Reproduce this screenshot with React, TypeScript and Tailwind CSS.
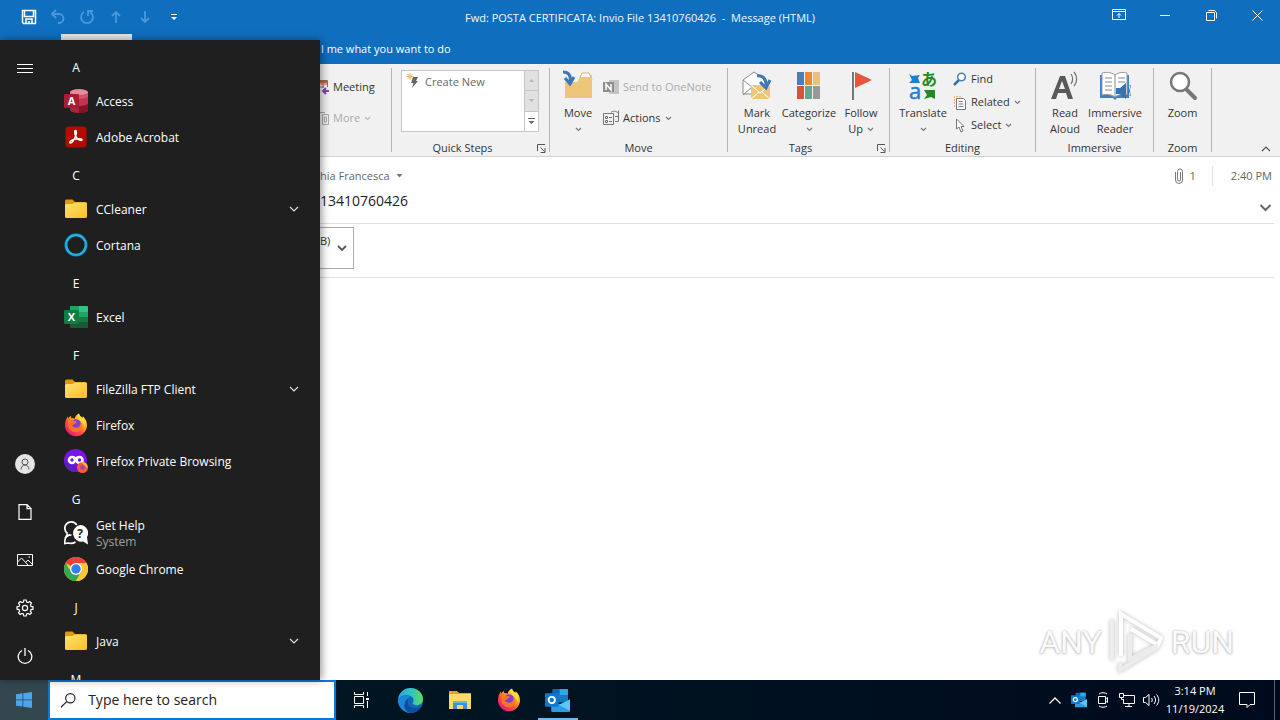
import type { ReactNode } from "react";
import clsx from "clsx";

type IconProps = { className?: string };

/* ---------- small glyphs ---------- */

function Caret({ className = "text-[#777]" }: IconProps) {
  return (
    <svg width="7" height="5" viewBox="0 0 7 5" fill="none" stroke="currentColor" strokeWidth="1.2" className={clsx("inline-block shrink-0", className)}>
      <path d="M1 1l2.5 2.5L6 1" />
    </svg>
  );
}

function Launcher() {
  return (
    <svg width="9" height="9" viewBox="0 0 9 9" fill="none" stroke="#555">
      <path d="M.5 7V.5H8M3.5 3.5l4 4M8 4v4.5H3.5" />
    </svg>
  );
}

function Chevron({ className }: IconProps) {
  return (
    <svg width="12" height="12" viewBox="0 0 12 12" fill="none" stroke="currentColor" className={className}>
      <path d="M2 4l4 4 4-4" strokeWidth="1.2" />
    </svg>
  );
}

/* ---------- app icons ---------- */

function AccessIcon() {
  return (
    <svg width="24" height="24" viewBox="0 0 24 24">
      <path d="M6 3v18c0 1.600 4 3 9 3s9-1.400 9-3V3z" fill="#a4263a" />
      <path d="M6 9c2 2 12 3 18-1v7c-5 3-14 3-18 1z" fill="#c6344b" />
      <path d="M15 17c4 0 7-1 9-2v6c0 1.600-4 3-9 3z" fill="#861427" />
      <path d="M6 3v6c3 2 14 2 18-1V3z" fill="#d9506b" />
      <ellipse cx="15" cy="3" rx="9" ry="3" fill="#e78a9b" />
      <rect y="5" width="15" height="14" rx="1" fill="#a81c36" />
      <text x="7.500" y="16" textAnchor="middle" fontSize="11" fontWeight="700" fill="#fff" fontFamily="Open Sans, sans-serif">A</text>
    </svg>
  );
}

function AcrobatIcon() {
  return (
    <svg width="24" height="24" viewBox="0 0 24 24">
      <rect x="1.500" y="1.500" width="21" height="21" rx="3.500" fill="#b30b00" />
      <path d="M11.500 5.500c1.300 0 1 3.500-.3 6.500-1.300 3.200-3.500 6-4.700 6-1.500 0-.8-2.400 4-3.700 3.500-1 7.500-.9 7.500.5 0 1.700-4 .2-5.900-2.800-1.300-2-2-6.500-.6-6.500z" fill="none" stroke="#fff" strokeWidth="1.500" />
    </svg>
  );
}

function FolderIcon() {
  return (
    <svg width="24" height="24" viewBox="0 0 24 24">
      <defs>
        <linearGradient id="folder" x1="0" y1="0" x2="1" y2="1">
          <stop offset="0" stopColor="#ffe07a" />
          <stop offset="1" stopColor="#fbbf22" />
        </linearGradient>
      </defs>
      <path d="M1 4a1.500 1.500 0 011.500-1.500h6L11 5h10a2 2 0 012 2v4H1z" fill="#d99a0b" />
      <path d="M1 8.500A1.500 1.500 0 012.500 7h6L11 5.500h10.500A1.500 1.500 0 0123 7v12.500a1.500 1.500 0 01-1.500 1.500h-19A1.500 1.500 0 011 19.500z" fill="url(#folder)" />
    </svg>
  );
}

function CortanaIcon() {
  return (
    <svg width="24" height="24" viewBox="0 0 24 24" fill="none">
      <circle cx="12" cy="12" r="10.300" stroke="#0d6aa8" strokeWidth="2.800" />
      <circle cx="12" cy="12" r="9.800" stroke="#22b4e0" strokeWidth="2.200" />
    </svg>
  );
}

function ExcelIcon() {
  return (
    <svg width="24" height="24" viewBox="0 0 24 24">
      <rect x="6" y="1" width="18" height="22" rx="1" fill="#185c37" />
      <path d="M6 1h9v6H6z" fill="#21a366" />
      <path d="M15 1h8a1 1 0 011 1v5h-9z" fill="#33c481" />
      <path d="M15 7h9v5.500h-9z" fill="#21a366" />
      <path d="M6 7h9v10H6zM15 12.500h9V17h-9z" fill="#107c41" />
      <rect y="5" width="15" height="14" rx="1" fill="#107c41" />
      <text x="7.500" y="16" textAnchor="middle" fontSize="11" fontWeight="700" fill="#fff" fontFamily="Open Sans, sans-serif">X</text>
    </svg>
  );
}

function FirefoxIcon() {
  return (
    <svg width="24" height="24" viewBox="0 0 24 24">
      <defs>
        <linearGradient id="fox" x1=".85" y1=".1" x2=".2" y2=".95">
          <stop offset="0" stopColor="#fff44f" />
          <stop offset=".35" stopColor="#ffa21c" />
          <stop offset=".65" stopColor="#ff4a3c" />
          <stop offset="1" stopColor="#e31587" />
        </linearGradient>
      </defs>
      <path d="M15 .5c.3 2 1.500 3 3 4.300.6-.3.8-.8.8-1.500 2.600 2.300 4.200 5.500 4.200 9a11 11 0 01-22 0c0-3 .8-5.300 1.700-7 .2-.7.600-1.300 1-1.800 0 .8.200 1.500.5 2 .8-1.200 1.900-2.200 3-2.700-.2.700-.2 1.400 0 2.200 1.500.1 2.700.2 3.500.8C11 3.500 12.500 1.500 15 .5z" fill="url(#fox)" />
      <circle cx="12" cy="11.500" r="5.200" fill="#7f3fd1" />
      <path d="M4.500 8c1.500-1.300 3.700-1.500 5.500-.2 1.400.2 2.800.3 2.800 1.200 0 1-1.800 1.300-2.400 2.100-.5.8-1.500 1-2.400.8 1 2.500 4 3.500 6.500 2 1.800-1.200 2.300-3 1.800-5 2 1.500 2.700 4.500 1.200 7-2 3.500-7 4.300-10.300 1.800C4.500 16 3.300 11.500 4.500 8z" fill="#ff7a1f" opacity=".85" />
      <path d="M15 .5c.3 2 1.500 3 3 4.300 2.500 2.400 3.500 5.500 2.500 9.200-.7-3.500-2.500-5.500-5-6.700-1.800-1.300-1.700-4.300-.5-6.800z" fill="#ffd93a" />
    </svg>
  );
}

function PrivateIcon() {
  return (
    <svg width="24" height="24" viewBox="0 0 24 24">
      <circle cx="11.500" cy="11.500" r="11.500" fill="#7a12ea" />
      <path d="M0 11.500a11.500 11.500 0 0011.500 11.500c3 0 5-1 7-3z" fill="#5a1fc0" />
      <circle cx="8" cy="11" r="3" fill="none" stroke="#fff" strokeWidth="2.600" />
      <circle cx="15.500" cy="11" r="3" fill="none" stroke="#fff" strokeWidth="2.600" />
      <path d="M9.500 7l2.300 1L14 7v3H9.500z" fill="#fff" />
      <circle cx="18.500" cy="18.500" r="5.500" fill="#ff5a36" />
      <path d="M17 13.500c4-1 7 2 6.500 6-1-2-3-3.500-6.500-6z" fill="#ffc83a" />
      <circle cx="18.500" cy="18.500" r="2.300" fill="#a33fc0" />
    </svg>
  );
}

function HelpIcon() {
  return (
    <svg width="24" height="24" viewBox="0 0 24 24">
      <path d="M3.500 12.500C1.500 11 .8 9 .8 7a6.500 6.500 0 0112-3" fill="none" stroke="#fff" strokeWidth="1.700" />
      <path d="M3.500 12.500L2 15.500l4-2" fill="none" stroke="#fff" strokeWidth="1.500" />
      <path d="M7.500 14C4 14 1 16 1 19l-.5 3.500L4 22c3 .8 5.500.3 7.500-1" fill="none" stroke="#fff" strokeWidth="1.700" />
      <path d="M16 4a8 8 0 017 12l1 7.500-5-3A8.300 8.300 0 1116 4z" fill="#fff" />
      <text x="16" y="16.500" textAnchor="middle" fontSize="12" fontWeight="700" fill="#1f1f1f" fontFamily="Open Sans, sans-serif">?</text>
    </svg>
  );
}

function ChromeIcon() {
  return (
    <svg width="24" height="24" viewBox="0 0 24 24">
      <circle cx="12" cy="12" r="12" fill="#fcc934" />
      <path d="M12 12L1.600 6A12 12 0 0122.400 6z" fill="#ea4335" />
      <path d="M1.600 6a12 12 0 0010.400 18l5.200-9L12 12H5z" fill="#34a853" />
      <path d="M12 6h10.400A12 12 0 0112 24l5.200-9z" fill="#fcc934" />
      <circle cx="12" cy="12" r="6" fill="#fff" />
      <circle cx="12" cy="12" r="4.700" fill="#3b7ded" />
    </svg>
  );
}

function EdgeIcon() {
  return (
    <svg width="25" height="25" viewBox="0 0 24 24">
      <defs>
        <linearGradient id="edge" x1="0" y1=".3" x2="1" y2=".3">
          <stop offset="0" stopColor="#2aa5e0" />
          <stop offset=".55" stopColor="#31c5c0" />
          <stop offset="1" stopColor="#62d957" />
        </linearGradient>
      </defs>
      <circle cx="12" cy="12" r="12" fill="#1267b8" />
      <path d="M0 11C1 4.500 6 0 12 0c7 0 12 5 12 10.500 0 4-3 6-6 6-2.500 0-4-.8-4-1.800 0-.8 1-1 1-3C15 9.500 12.500 7 8.500 7 4 7 1 9 0 11z" fill="url(#edge)" />
      <path d="M8.500 7C3.500 7 0 10 0 13c1 6.500 6 11 12 11-4-1-6-4.500-5.500-8 .3-3 2-5 4-6.500C12 8.700 11.500 7 8.500 7z" fill="#1c86d8" />
      <path d="M10.500 9.500c-2.500 3-1 8 3 9.500 3 1 6.500.3 9-1.500C21 20.500 17.500 24 12 24c-4-1-6.300-4.500-5.700-8.500.5-3 2-5 4.200-6z" fill="#0d4f9a" />
    </svg>
  );
}

function ExplorerIcon() {
  return (
    <svg width="24" height="22" viewBox="0 0 24 22">
      <path d="M1 2h8l2 2h12v6H1z" fill="#e8a317" />
      <path d="M1 5h22v15H1z" fill="#ffd867" />
      <path d="M5 12h14v8h-4v-4H9v4H5z" fill="#3a92dc" />
      <path d="M5 12h14v2H5z" fill="#66b5ef" />
    </svg>
  );
}

function OutlookIcon({ size }: { size: number }) {
  return (
    <svg width={size} height={size} viewBox="0 0 24 24">
      <rect x="7" y="1" width="15" height="13" rx="1" fill="#1066b5" />
      <path d="M14 1h8v6h-8z" fill="#32a9e7" />
      <path d="M7 7h7v6H7zM14 7h8v6h-8z" fill="#167abf" />
      <path d="M24 11v11a1 1 0 01-1 1H7a1 1 0 01-1-1V12l9 4z" fill="#2a9ee2" />
      <path d="M24 11v11L13 16z" fill="#5cc6f4" />
      <rect y="5" width="13" height="13" rx="1" fill="#0f78d4" />
      <circle cx="6.500" cy="11.500" r="3" fill="none" stroke="#fff" strokeWidth="1.800" />
    </svg>
  );
}

/* ---------- ribbon icons ---------- */

function MoveIcon() {
  return (
    <svg width="32" height="32" viewBox="0 0 32 32">
      <path d="M17 10l3-7h7l3 7z" fill="#fff" stroke="#e5b25b" />
      <path d="M3 12h12l4-5h9l2-3v24H3z" fill="#edc679" />
      <path d="M1 2c6 0 8 4 7 9M3 8l5 6 4-7" fill="none" stroke="#3b78b8" strokeWidth="3" />
    </svg>
  );
}

function MarkUnreadIcon() {
  return (
    <svg width="32" height="32" viewBox="0 0 32 32">
      <path d="M2 10L13 2l12 8v14H2z" fill="#fff" stroke="#8a8a8a" />
      <path d="M2 10l9 7-9 8" fill="none" stroke="#8a8a8a" />
      <path d="M10 15h19v14H10z" fill="#edc679" />
      <path d="M10 15l9 8 10-8M10 29l8-7M29 29l-8-7" fill="none" stroke="#fff" />
      <path d="M16 6c6-1 9 3 9 9M19 12l6 6 4-8" fill="none" stroke="#3b78b8" strokeWidth="3" />
    </svg>
  );
}

function CategorizeIcon() {
  return (
    <svg width="32" height="32" viewBox="0 0 32 32">
      <path d="M4 2h7v13H4z" fill="#4a7ebb" />
      <path d="M12 2h7v13h-7z" fill="#ed8733" />
      <path d="M20 2h7v13h-7z" fill="#e8c27a" />
      <path d="M4 16h7v13H4z" fill="#d35439" />
      <path d="M12 16h7v13h-7z" fill="#68a490" />
      <path d="M20 16h7v13h-7z" fill="#999" />
    </svg>
  );
}

function FlagIcon() {
  return (
    <svg width="32" height="32" viewBox="0 0 32 32">
      <path d="M8 2v28" stroke="#777" strokeWidth="2" />
      <path d="M10 2l17 8-17 8z" fill="#e8553a" />
    </svg>
  );
}

function TranslateIcon() {
  return (
    <svg width="32" height="32" viewBox="0 0 32 32" className="overflow-visible">
      <text x="14" y="15" fontSize="16" fontWeight="700" fill="#218a21" fontFamily="Noto Sans CJK JP, sans-serif">あ</text>
      <text x="2" y="29" fontSize="22" fill="#1a7fd0" stroke="#1a7fd0" strokeWidth=".5" fontFamily="Open Sans, sans-serif">a</text>
      <path d="M2 4l3 2 8-1-2 3 2 5H2l3-3z" fill="#1a7fd0" />
      <path d="M17 20h11v9l-4-2-7 2 3-4z" fill="#218a21" />
    </svg>
  );
}

function ReadAloudIcon() {
  return (
    <svg width="32" height="32" viewBox="0 0 32 32">
      <path d="M2 29L11 6h5l8 23h-5l-2-6H9l-2 6zM10 19h6l-3-8z" fill="#595959" fillRule="evenodd" />
      <path d="M22 4c2 3 2 7 0 10M25 2c3.500 4 3.500 10 0 14" fill="none" stroke="#777" strokeWidth="1.300" />
    </svg>
  );
}

function ReaderIcon() {
  return (
    <svg width="32" height="32" viewBox="0 0 32 32">
      <path d="M1 5h29v23H18l-2 2-2-2H1z" fill="#3f7ebf" />
      <path d="M3 3c4-1 9-1 13 2 4-3 9-3 12-2v22c-4-1-8-1-12 2-4-3-9-3-13-2z" fill="#fff" stroke="#999" />
      <path d="M16 5v21M6 8h7M6 12h7M6 16h7M6 20h7M19 8h7M19 12h7" stroke="#888" fill="none" />
      <path d="M17 18h4l6-5v16l-6-5h-4z" fill="#3473b4" />
      <path d="M29 17c2 3 2 5 0 8M31 15c2 4 2 8 0 11" fill="none" stroke="#3473b4" />
    </svg>
  );
}

function ZoomIcon() {
  return (
    <svg width="32" height="32" viewBox="0 0 32 32">
      <path d="M19 19l9 9" stroke="#777" strokeWidth="4" strokeLinecap="round" />
      <circle cx="13" cy="12" r="9" fill="#fff" stroke="#777" strokeWidth="2.500" />
    </svg>
  );
}

/* ---------- ribbon ---------- */

type GroupProps = { label?: string; width: string; launcher?: boolean; children: ReactNode };

function Group({ label, width, launcher, children }: GroupProps) {
  return (
    <>
      <div className={clsx("flex shrink-0 flex-col pt-1.5", width)}>
        <div className="flex h-[70px]">{children}</div>
        <div className="flex h-4 items-center">
          <span className="flex-1 text-center text-[11px] leading-4">{label}</span>
          {launcher && (
            <button aria-label={`${label} options`} className="flex w-4 justify-center">
              <Launcher />
            </button>
          )}
        </div>
      </div>
      <div className="mt-1 h-[84px] w-px shrink-0 bg-[#b5b5b5]" />
    </>
  );
}

function BigButton({ icon, line1, line2, caret, width }: { icon: ReactNode; line1: string; line2?: string; caret?: boolean; width: string }) {
  return (
    <button className={clsx("flex shrink-0 flex-col items-center text-[11px] leading-4 whitespace-nowrap", width)}>
      <span className="mb-[3px] h-8">{icon}</span>
      <span>{line1}</span>
      <span className="flex h-4 items-center gap-1">
        {line2}
        {caret && <Caret />}
      </span>
    </button>
  );
}

function SmallButton({ icon, label, caret, disabled }: { icon: ReactNode; label: string; caret?: boolean; disabled?: boolean }) {
  return (
    <button disabled={disabled} className={clsx("flex items-center gap-1 text-[11px] leading-4 whitespace-nowrap", disabled && "text-[#ababab]")}>
      {icon}
      {label}
      {caret && <Caret className={disabled ? "text-[#bbb]" : "text-[#777]"} />}
    </button>
  );
}

function Ribbon() {
  return (
    <div className="flex h-[93px] overflow-hidden border-b border-[#d2d2d2] bg-[#f1f1f1] pl-80 text-[#333]">
      <Group width="w-[71px]">
        <div className="flex flex-col gap-[15px] pt-[9px]">
          <SmallButton
            label="Meeting"
            icon={
              <svg width="9" height="16" viewBox="0 0 9 16">
                <path d="M0 1.500h7.500V8M0 5h7M3 1v8M0 8h4" stroke="#9c6a50" fill="none" />
                <path d="M0 2h7v2H0z" fill="#c9624a" />
                <path d="M9 12H4M6 9l-3 3 3 3" stroke="#8246af" strokeWidth="2" fill="none" />
              </svg>
            }
          />
          <SmallButton
            label="More"
            caret
            disabled
            icon={
              <svg width="9" height="16" viewBox="0 0 9 16" fill="none" stroke="#aaa">
                <path d="M0 2.500h5M2.500 4.500h6v10h-6zM4.500 7h2v5h-2z" />
              </svg>
            }
          />
        </div>
      </Group>

      <Group width="w-[157px]" label="Quick Steps" launcher>
        <div className="ml-[9px] flex h-[62px] w-[138px] border border-[#c6c6c6] bg-white">
          <button className="flex h-[22px] flex-1 items-center gap-1 pl-1 text-[11px] text-[#666]">
            <svg width="15" height="18" viewBox="0 0 15 18">
              <path d="M4 0v7M.5 3.500h7M1.500 1l5 5M6.500 1l-5 5" stroke="#e5b673" />
              <path d="M7 4h5l-2 4h2l-6 7 1.500-5H5z" fill="#666" />
            </svg>
            Create New
          </button>
          <div className="flex w-3.5 flex-col border-l border-[#c6c6c6]">
            <button aria-label="Previous row" className="flex flex-1 items-center justify-center bg-[#e1e1e1]">
              <svg width="5" height="3"><path d="M0 3l2.500-3L5 3z" fill="#b5b5b5" /></svg>
            </button>
            <button aria-label="Next row" className="flex flex-1 items-center justify-center border-y border-[#c6c6c6] bg-[#e1e1e1]">
              <svg width="5" height="3"><path d="M0 0l2.500 3L5 0z" fill="#b5b5b5" /></svg>
            </button>
            <button aria-label="More quick steps" className="flex flex-1 items-center justify-center">
              <svg width="7" height="7"><path d="M0 .5h7" stroke="#666" /><path d="M.5 3h6l-3 3z" fill="#666" /></svg>
            </button>
          </div>
        </div>
      </Group>

      <Group width="w-[177px]" label="Move">
        <BigButton icon={<MoveIcon />} line1="Move" caret width="ml-1.5 w-11" />
        <div className="ml-[3px] flex flex-col gap-[15px] pt-[9px]">
          <SmallButton
            label="Send to OneNote"
            disabled
            icon={
              <svg width="16" height="16" viewBox="0 0 16 16">
                <path d="M6 1h10v14H6z" fill="#c4c4c4" />
                <path d="M0 3h11v10H0z" fill="#8e8e8e" />
                <path d="M3 11V5l5 6V5" fill="none" stroke="#fff" strokeWidth="1.500" />
              </svg>
            }
          />
          <SmallButton
            label="Actions"
            caret
            icon={
              <svg width="16" height="16" viewBox="0 0 16 16" fill="none" stroke="#777">
                <path d="M.5 3.500h10v11H.5zM6 7.500h3M6 11.500h3M2.500 6.500h2v2h-2zM2.500 10.500h2v2h-2zM8 2.500c2-2 5-1.500 7.500.500M15.500.500V6.500H12M15.500 3.500v8H12" />
              </svg>
            }
          />
        </div>
      </Group>

      <Group width="w-[161px]" label="Tags" launcher>
        <BigButton icon={<MarkUnreadIcon />} line1="Mark" line2="Unread" width="ml-[3px] w-[52px]" />
        <BigButton icon={<CategorizeIcon />} line1="Categorize" caret width="w-[52px]" />
        <BigButton icon={<FlagIcon />} line1="Follow" line2="Up" caret width="w-[52px]" />
      </Group>

      <Group width="w-[145px]" label="Editing">
        <BigButton icon={<TranslateIcon />} line1="Translate" caret width="ml-1.5 w-[54px]" />
        <div className="ml-[3px] flex flex-col gap-[7px] pt-px">
          <SmallButton
            label="Find"
            icon={
              <svg width="14" height="14" viewBox="0 0 14 14">
                <path d="M1 13l5-5" stroke="#3d6ea5" strokeWidth="2.500" />
                <circle cx="8.500" cy="5" r="3.800" fill="#fff" stroke="#4b7db5" strokeWidth="1.500" />
              </svg>
            }
          />
          <SmallButton
            label="Related"
            caret
            icon={
              <svg width="14" height="15" viewBox="0 0 14 15" fill="none">
                <path d="M1.500 12V1.500H9" stroke="#e5b673" strokeDasharray="2 1" />
                <path d="M3.500 3.500h7l2 2v9h-9z" fill="#fff" stroke="#777" />
                <path d="M5.500 6.500h4M5.500 9h5M5.500 11.500h5" stroke="#777" />
              </svg>
            }
          />
          <SmallButton
            label="Select"
            caret
            icon={
              <svg width="14" height="15" viewBox="0 0 14 15">
                <path d="M3.500 1v10l2.500-2 2 5 2-1-2-4.500h3z" fill="#fff" stroke="#777" />
              </svg>
            }
          />
        </div>
      </Group>

      <Group width="w-[117px]" label="Immersive">
        <BigButton icon={<ReadAloudIcon />} line1="Read" line2="Aloud" width="ml-2 w-[42px]" />
        <BigButton icon={<ReaderIcon />} line1="Immersive" line2="Reader" width="w-[58px]" />
      </Group>

      <Group width="w-[57px]" label="Zoom">
        <BigButton icon={<ZoomIcon />} line1="Zoom" width="w-full" />
      </Group>

      <button aria-label="Collapse the ribbon" className="mt-auto mr-2 mb-px ml-auto">
        <Chevron className="rotate-180 text-[#555]" />
      </button>
    </div>
  );
}

/* ---------- outlook window ---------- */

function TitleBar() {
  return (
    <header className="flex h-[34px] items-center text-[#f2f8ff]">
      <div className="flex flex-1 items-center gap-[13px]">
        <button aria-label="Save" className="ml-[21px]">
          <svg width="16" height="16" viewBox="0 0 16 16" fill="none" stroke="#fff" strokeWidth="1.500">
            <path d="M1.500 1.500h13v13h-12l-1-1zM3.500 2v5.500h9V2M5 14v-4h6v4M8 12v2" />
          </svg>
        </button>
        <button aria-label="Undo">
          <svg width="16" height="16" viewBox="0 0 16 16" fill="none" stroke="#4a97dc" strokeWidth="1.800">
            <path d="M6 1L2 5l4 4M2.500 5H9a4.500 4.500 0 010 9H8" />
          </svg>
        </button>
        <button aria-label="Redo">
          <svg width="16" height="16" viewBox="0 0 16 16" fill="none" stroke="#4a97dc" strokeWidth="1.800">
            <path d="M5 3a6 6 0 106 0M9 7V2h5" />
          </svg>
        </button>
        <button aria-label="Previous item">
          <svg width="16" height="16" viewBox="0 0 16 16" fill="none" stroke="#4a97dc" strokeWidth="1.800">
            <path d="M8 14V3M4 7l4-4 4 4" />
          </svg>
        </button>
        <button aria-label="Next item">
          <svg width="16" height="16" viewBox="0 0 16 16" fill="none" stroke="#4a97dc" strokeWidth="1.800">
            <path d="M8 2v11M4 9l4 4 4-4" />
          </svg>
        </button>
        <button aria-label="Customize toolbar">
          <svg width="16" height="16" viewBox="0 0 16 16" fill="#fff">
            <path d="M5 5h6v1H5zM5 8h6l-3 3z" />
          </svg>
        </button>
      </div>
      <h1 className="pt-0.5 text-[11px] whitespace-pre">Fwd: POSTA CERTIFICATA: Invio File 13410760426  -  Message (HTML)</h1>
      <div className="flex flex-1 justify-end pb-1">
        <button aria-label="Ribbon display options" className="flex w-[46px] items-center justify-center">
          <svg width="14" height="12" viewBox="0 0 14 12" fill="none" stroke="#fff">
            <path d="M.5.5h13v10H.5zM.5 2.500h13M7 9V4.500M5 6.500l2-2 2 2" />
          </svg>
        </button>
        <button aria-label="Minimize" className="flex w-[46px] items-center justify-center">
          <span className="h-px w-2.5 bg-white" />
        </button>
        <button aria-label="Restore" className="flex w-[46px] items-center justify-center">
          <svg width="11" height="11" viewBox="0 0 11 11" fill="none" stroke="#fff">
            <path d="M.5 2.500h8v8h-8zM2.500.5h6l2 2v6" />
          </svg>
        </button>
        <button aria-label="Close" className="flex w-[46px] items-center justify-center">
          <svg width="11" height="11" viewBox="0 0 11 11" fill="none" stroke="#fff">
            <path d="M.5.5l10 10M10.500.5l-10 10" />
          </svg>
        </button>
      </div>
    </header>
  );
}

function MailWindow() {
  return (
    <section className="flex h-full flex-col bg-white font-['Open_Sans',sans-serif]">
      <div className="bg-[#106ebe]">
        <TitleBar />
        <div className="flex h-[30px] items-center">
          <div className="ml-[61px] h-full w-[71px] bg-[#e6e6e6]" />
          <button className="ml-[189px] text-[11px] text-white">l me what you want to do</button>
        </div>
      </div>
      <Ribbon />

      <div className="flex flex-col pr-1.5 pl-80">
        <div className="flex h-[67px] justify-between border-b border-[#e1e1e1]">
          <div className="flex flex-col pt-[11px]">
            <button className="flex items-center gap-1.5 text-[11px] leading-4 text-[#666]">
              hia Francesca
              <svg width="7" height="4"><path d="M.5 0h6l-3 3.500z" fill="#777" /></svg>
            </button>
            <h2 className="mt-[7px] text-sm leading-5 font-medium text-[#222]">13410760426</h2>
          </div>
          <div className="flex flex-col items-end pt-2 pr-0.5 text-[11px] text-[#666]">
            <div className="flex h-[22px] items-center">
              <svg width="10" height="16" viewBox="0 0 10 16" fill="none" stroke="#777">
                <path d="M6.500 4v7.500a1.500 1.500 0 01-3 0V3.500a2.500 2.500 0 015 0V12a3.500 3.500 0 01-7 0V4" />
              </svg>
              <span className="ml-1.5">1</span>
              <span className="mr-[18px] ml-4 h-5 w-px bg-[#e1e1e1]" />
              <time>2:40 PM</time>
            </div>
            <button aria-label="Expand header" className="mt-[14px]">
              <svg width="13" height="13" viewBox="0 0 13 13" fill="none" stroke="#666" strokeWidth="2">
                <path d="M1.500 4l5 5 5-5" />
              </svg>
            </button>
          </div>
        </div>
        <div className="flex h-[54px] border-b border-[#e1e1e1] pt-[3px]">
          <div className="flex h-[42px] w-[34px] border border-l-0 border-[#ababab] text-[11px] text-[#333]">
            <span className="mt-[5px] leading-4">B)</span>
            <button aria-label="Attachment options" className="mx-auto">
              <svg width="10" height="10" viewBox="0 0 10 10" fill="none" stroke="#555" strokeWidth="1.800">
                <path d="M1 3l4 4 4-4" />
              </svg>
            </button>
          </div>
        </div>
      </div>
    </section>
  );
}

function Watermark() {
  return (
    <div className="absolute right-[46px] bottom-1.5 flex items-center gap-1.5 font-[Roboto,sans-serif] text-[32px] leading-none text-[#fafafa] [text-shadow:0_0_2px_#aaa,0_1px_3px_#ccc]">
      <span>ANY</span>
      <svg width="57" height="64" viewBox="0 0 57 64" fill="none" className="drop-shadow-[0_0_2px_#bbb]">
        <path d="M13 46V4l40 24-3 7-27-16" stroke="#fff" strokeWidth="4" />
        <path d="M4 10v40M22 24v25l28-14M12 53v7l38-23" stroke="#ececec" strokeWidth="4" />
      </svg>
      <span>RUN</span>
    </div>
  );
}

/* ---------- start menu ---------- */

type Entry = { letter: string } | { name: string; icon: ReactNode; folder?: boolean; note?: string };

const entries: Entry[] = [
  { letter: "A" },
  { name: "Access", icon: <AccessIcon /> },
  { name: "Adobe Acrobat", icon: <AcrobatIcon /> },
  { letter: "C" },
  { name: "CCleaner", icon: <FolderIcon />, folder: true },
  { name: "Cortana", icon: <CortanaIcon /> },
  { letter: "E" },
  { name: "Excel", icon: <ExcelIcon /> },
  { letter: "F" },
  { name: "FileZilla FTP Client", icon: <FolderIcon />, folder: true },
  { name: "Firefox", icon: <FirefoxIcon /> },
  { name: "Firefox Private Browsing", icon: <PrivateIcon /> },
  { letter: "G" },
  { name: "Get Help", icon: <HelpIcon />, note: "System" },
  { name: "Google Chrome", icon: <ChromeIcon /> },
  { letter: "J" },
  { name: "Java", icon: <FolderIcon />, folder: true },
  { letter: "M" },
];

function RailButton({ label, children }: { label: string; children: ReactNode }) {
  return (
    <button aria-label={label} className="flex h-12 w-[50px] shrink-0 items-center justify-center">
      {children}
    </button>
  );
}

function StartMenu() {
  return (
    <nav className="absolute top-10 bottom-0 left-0 flex w-80 overflow-hidden bg-[#1f1f1f] font-['Open_Sans',sans-serif] text-white shadow-[2px_0_8px_rgba(0,0,0,0.4)]">
      <div className="flex w-12 flex-col pt-1">
        <RailButton label="Expand menu">
          <svg width="16" height="9" viewBox="0 0 16 9" stroke="#fff">
            <path d="M0 .5h16M0 4.500h16M0 8.500h16" />
          </svg>
        </RailButton>
        <div className="flex-1" />
        <RailButton label="Account">
          <svg width="20" height="20" viewBox="0 0 20 20" fill="none" stroke="#555">
            <circle cx="10" cy="10" r="10" fill="#e4e4e4" stroke="none" />
            <circle cx="10" cy="8" r="3" />
            <path d="M6 15.500c0-6 8-6 8 0" />
          </svg>
        </RailButton>
        <RailButton label="Documents">
          <svg width="14" height="16" viewBox="0 0 14 16" fill="none" stroke="#fff" strokeWidth="1.200">
            <path d="M1 .6h8l4 4v10.800H1zM9 .6v4h4" />
          </svg>
        </RailButton>
        <RailButton label="Pictures">
          <svg width="16" height="12" viewBox="0 0 16 12" fill="none" stroke="#fff">
            <path d="M.5.5h15v11H.5zM.5 8l4-4 7 7.500M8.500 8.500l2.500-2.500 4.500 4.500" />
            <path d="M11.500 3h1.500" />
          </svg>
        </RailButton>
        <RailButton label="Settings">
          <svg width="18" height="18" viewBox="0 0 18 18" fill="none" stroke="#fff" strokeWidth="1.200">
            <path d="M7.800 1h2.400l.4 2 1.500.6 1.700-1.100 1.700 1.700-1.100 1.700.6 1.500 2 .4v2.400l-2 .4-.6 1.500 1.100 1.700-1.700 1.700-1.700-1.100-1.500.6-.4 2H7.800l-.4-2-1.500-.6-1.700 1.100-1.700-1.700 1.100-1.700-.6-1.500-2-.4V7.800l2-.4.6-1.500-1.100-1.700 1.700-1.700 1.700 1.100 1.500-.6z" />
            <circle cx="9" cy="9" r="2.600" />
          </svg>
        </RailButton>
        <RailButton label="Power">
          <svg width="16" height="18" viewBox="0 0 16 18" fill="none" stroke="#fff" strokeWidth="1.300">
            <path d="M8 1v8M5 3.500a6.800 6.800 0 106 0" />
          </svg>
        </RailButton>
      </div>

      <ul className="flex-1 pt-2 pl-4 text-[12px] leading-4">
        {entries.map((e) =>
          "letter" in e ? (
            <li key={e.letter} className="flex h-9 w-6 items-center justify-center pt-1">
              {e.letter}
            </li>
          ) : (
            <li key={e.name}>
              <button className="flex h-9 w-full items-center gap-2 pr-5 text-left">
                <span className="mb-0.5">{e.icon}</span>
                <span className="flex flex-1 flex-col">
                  {e.name}
                  {e.note && <span className="text-[#a0a0a0]">{e.note}</span>}
                </span>
                {e.folder && <Chevron className="mb-0.5 text-[#ddd]" />}
              </button>
            </li>
          ),
        )}
      </ul>
    </nav>
  );
}

/* ---------- taskbar ---------- */

function TaskButton({ label, active, children }: { label: string; active?: boolean; children: ReactNode }) {
  return (
    <button aria-label={label} className="flex h-10 w-[49px] flex-col items-center">
      <span className="flex flex-1 items-center">{children}</span>
      {active && <span className="-mt-0.5 h-0.5 w-10 bg-[#76b9ed]" />}
    </button>
  );
}

function Taskbar() {
  return (
    <footer className="flex h-10 shrink-0 bg-linear-to-r from-[#001a22] to-[#000a1e] font-['Open_Sans',sans-serif] text-white">
      <button aria-label="Start" className="flex w-12 items-center justify-center bg-[#34474f]">
        <svg width="16" height="16" viewBox="0 0 16 16" fill="#4aa5ea">
          <path d="M0 2.200l6.500-.9v6.200H0zM7.300 1.200L16 0v7.500H7.300zM0 8.300h6.500v6.300L0 13.700zM7.300 8.300H16V16l-8.700-1.200z" />
        </svg>
      </button>
      <label className="flex w-72 items-center gap-3 border-2 border-[#0a78d6] bg-white pl-2.5 text-black">
        <svg width="18" height="17" viewBox="0 0 18 17" fill="none" stroke="#222" strokeWidth="1.300">
          <circle cx="11.500" cy="6" r="5.200" />
          <path d="M7.500 9.700L1 16" />
        </svg>
        <input aria-label="Search" placeholder="Type here to search" className="w-full text-sm outline-none placeholder:text-[#222]" />
      </label>
      <div className="ml-px flex">
        <TaskButton label="Task view">
          <svg width="18" height="16" viewBox="0 0 18 16" fill="none" stroke="#fff">
            <path d="M1.500 0v2.500h9V0M1.500 16v-2.500h9V16M1.500 4.500h9v7h-9zM14.500 0v4M14.500 9v7" />
            <path d="M13 6h3v2h-3z" fill="#fff" stroke="none" />
          </svg>
        </TaskButton>
        <TaskButton label="Edge"><EdgeIcon /></TaskButton>
        <TaskButton label="File Explorer"><ExplorerIcon /></TaskButton>
        <TaskButton label="Firefox"><FirefoxIcon /></TaskButton>
        <TaskButton label="Outlook" active><OutlookIcon size={25} /></TaskButton>
      </div>

      <div className="ml-auto flex items-center">
        <button aria-label="Hidden icons" className="flex w-6 justify-center">
          <svg width="12" height="7" viewBox="0 0 12 7" fill="none" stroke="#fff" strokeWidth="1.300"><path d="M.5 6.500L6 1l5.500 5.500" /></svg>
        </button>
        <button aria-label="Outlook" className="flex w-6 justify-center"><OutlookIcon size={16} /></button>
        <button aria-label="Meet now" className="flex w-6 justify-center">
          <svg width="14" height="16" viewBox="0 0 14 16" fill="none" stroke="#fff">
            <path d="M2.500 4.500h7v7h-7zM9.500 7l2-1.500v5l-2-1.500M3 2c2-1.700 6-1.700 8 0M3 14c2 1.700 6 1.700 8 0" />
          </svg>
        </button>
        <button aria-label="Network" className="flex w-6 justify-center">
          <svg width="16" height="14" viewBox="0 0 16 14" fill="none" stroke="#fff">
            <path d="M5 2.500h10.500v8H4.500V6M10 10.500v3M6 13.500h7M.5.500h4v4h-4zM2.500 4.500v2h2" />
          </svg>
        </button>
        <button aria-label="Volume" className="flex w-6 justify-center">
          <svg width="17" height="14" viewBox="0 0 17 14" fill="none" stroke="#fff">
            <path d="M.5 4.500h2l3.500-3v11l-3.500-3h-2zM8.500 5c1 1.300 1 2.700 0 4M11 3c2 2.500 2 5.500 0 8M13.500 1.500c3 3.500 3 7.500 0 11" />
          </svg>
        </button>
        <time className="w-16 text-center text-[11px] leading-[18px] whitespace-nowrap">
          3:14 PM
          <br />
          11/19/2024
        </time>
        <button aria-label="Notifications" className="flex w-10 justify-center">
          <svg width="16" height="16" viewBox="0 0 16 16" fill="none" stroke="#fff">
            <path d="M.5.500h15v12H11l-3 3v-3H.5z" />
          </svg>
        </button>
        <div className="mr-[5px] ml-[7px] h-10 w-px bg-[#5a6472]" />
      </div>
    </footer>
  );
}

export default function App() {
  return (
    <div className="flex h-screen flex-col overflow-hidden">
      <main className="relative min-h-0 flex-1">
        <MailWindow />
        <Watermark />
        <StartMenu />
      </main>
      <Taskbar />
    </div>
  );
}
